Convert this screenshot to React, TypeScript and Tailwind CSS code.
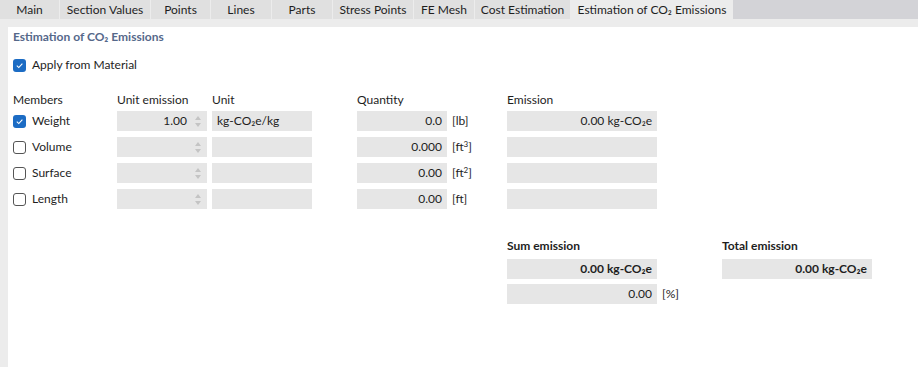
import React from 'react';

const tabs = [
    { label: 'Main', w: 'w-[60px]' },
    { label: 'Section Values', w: 'w-[91px]' },
    { label: 'Points', w: 'w-[60px]' },
    { label: 'Lines', w: 'w-[61px]' },
    { label: 'Parts', w: 'w-[61px]' },
    { label: 'Stress Points', w: 'w-[81px]' },
    { label: 'FE Mesh', w: 'w-[61px]' },
    { label: 'Cost Estimation', w: 'w-[96px]' },
];

const Check = ({ checked }: { checked: boolean }) =>
    checked ? (
        <span className="w-[13px] h-[13px] rounded-[3px] bg-[#1c6cc4] flex items-center justify-center">
            <svg width="9" height="9" viewBox="0 0 10 10">
                <path d="M2 5.2 L4.2 7.3 L8.2 2.8" fill="none" stroke="white" strokeWidth="1.2" />
            </svg>
        </span>
    ) : (
        <span className="w-[13px] h-[13px] rounded-[3px] border border-[#555] bg-white" />
    );

const Spin = () => (
    <span className="flex flex-col items-center gap-[3px] w-[10px]">
        <svg width="6" height="4" viewBox="0 0 6 4">
            <path d="M0 4 L3 0 L6 4 Z" fill="#c4c4c4" />
        </svg>
        <svg width="6" height="4" viewBox="0 0 6 4">
            <path d="M0 0 L3 4 L6 0 Z" fill="#c4c4c4" />
        </svg>
    </span>
);

const Box = ({ w, children, bold }: { w: string; children?: React.ReactNode; bold?: boolean }) => (
    <div className={`${w} shrink-0 h-[20px] bg-[#e6e6e6] flex items-center justify-end pr-[5px] ${bold ? 'font-bold' : ''}`}>
        {children}
    </div>
);

const rows = [
    { name: 'Weight', checked: true, ue: '1.00', unit: 'kg-CO₂e/kg', qty: '0.0', qu: <>[lb]</>, em: '0.00 kg-CO₂e' },
    { name: 'Volume', checked: false, ue: '', unit: '', qty: '0.000', qu: <>[ft<sup className="text-[8px]">3</sup>]</>, em: '' },
    { name: 'Surface', checked: false, ue: '', unit: '', qty: '0.00', qu: <>[ft<sup className="text-[8px]">2</sup>]</>, em: '' },
    { name: 'Length', checked: false, ue: '', unit: '', qty: '0.00', qu: <>[ft]</>, em: '' },
];

export default function App() {
    return (
        <div className="w-[918px] h-[367px] bg-[#ececec] flex flex-col text-[12px] text-[#1e1e1e] overflow-hidden" style={{ fontFamily: 'Lato, "Noto Sans", sans-serif' }}>
            {/* Tabs */}
            <div className="h-[19px] flex bg-[#d3d3d7] shrink-0">
                {tabs.map((t) => (
                    <div key={t.label} className={`${t.w} h-full bg-[#e0e0e0] border-r border-[#ececec] flex items-center justify-center`}>
                        {t.label}
                    </div>
                ))}
                <div className="w-[162px] h-full bg-[#ececec] flex items-center justify-center">Estimation of CO₂ Emissions</div>
            </div>

            {/* Panel */}
            <div className="flex-1 ml-[8px] mt-[8px] bg-white pl-[5px] pt-[2px] flex flex-col">
                <div className="h-[16px] flex items-center font-bold text-[#55688a]">Estimation of CO₂ Emissions</div>

                <div className="mt-[13px] h-[14px] flex items-center gap-[6px]">
                    <Check checked />
                    <span>Apply from Material</span>
                </div>

                <div className="mt-[20px] h-[16px] flex items-center">
                    <span className="w-[104px]">Members</span>
                    <span className="w-[95px]">Unit emission</span>
                    <span className="w-[145px]">Unit</span>
                    <span className="w-[150px]">Quantity</span>
                    <span>Emission</span>
                </div>

                <div className="mt-[3px] flex flex-col gap-[6px]">
                    {rows.map((r) => (
                        <div key={r.name} className="h-[20px] flex items-center">
                            <div className="w-[104px] flex items-center gap-[6px]">
                                <Check checked={r.checked} />
                                <span>{r.name}</span>
                            </div>
                            <div className="w-[90px] h-[20px] bg-[#e6e6e6] flex items-center justify-end pr-[4px] gap-[6px]">
                                <span>{r.ue}</span>
                                <Spin />
                            </div>
                            <div className="w-[100px] h-[20px] bg-[#e6e6e6] ml-[5px] flex items-center pl-[5px]">{r.unit}</div>
                            <div className="ml-[45px] flex items-center">
                                <Box w="w-[90px]">{r.qty}</Box>
                                <span className="w-[60px] pl-[5px]">{r.qu}</span>
                            </div>
                            <Box w="w-[150px]">{r.em}</Box>
                        </div>
                    ))}
                </div>

                <div className="mt-[29px] ml-[494px] flex gap-[65px]">
                    <div className="w-[150px] flex flex-col">
                        <div className="h-[16px] flex items-center font-bold">Sum emission</div>
                        <div className="mt-[5px]">
                            <Box w="w-[150px]" bold>0.00 kg-CO₂e</Box>
                        </div>
                        <div className="mt-[5px] flex items-center whitespace-nowrap">
                            <Box w="w-[150px]">0.00</Box>
                            <span className="pl-[5px]">[%]</span>
                        </div>
                    </div>
                    <div className="w-[150px] flex flex-col">
                        <div className="h-[16px] flex items-center font-bold">Total emission</div>
                        <div className="mt-[5px]">
                            <Box w="w-[150px]" bold>0.00 kg-CO₂e</Box>
                        </div>
                    </div>
                </div>
            </div>
        </div>
    );
}
